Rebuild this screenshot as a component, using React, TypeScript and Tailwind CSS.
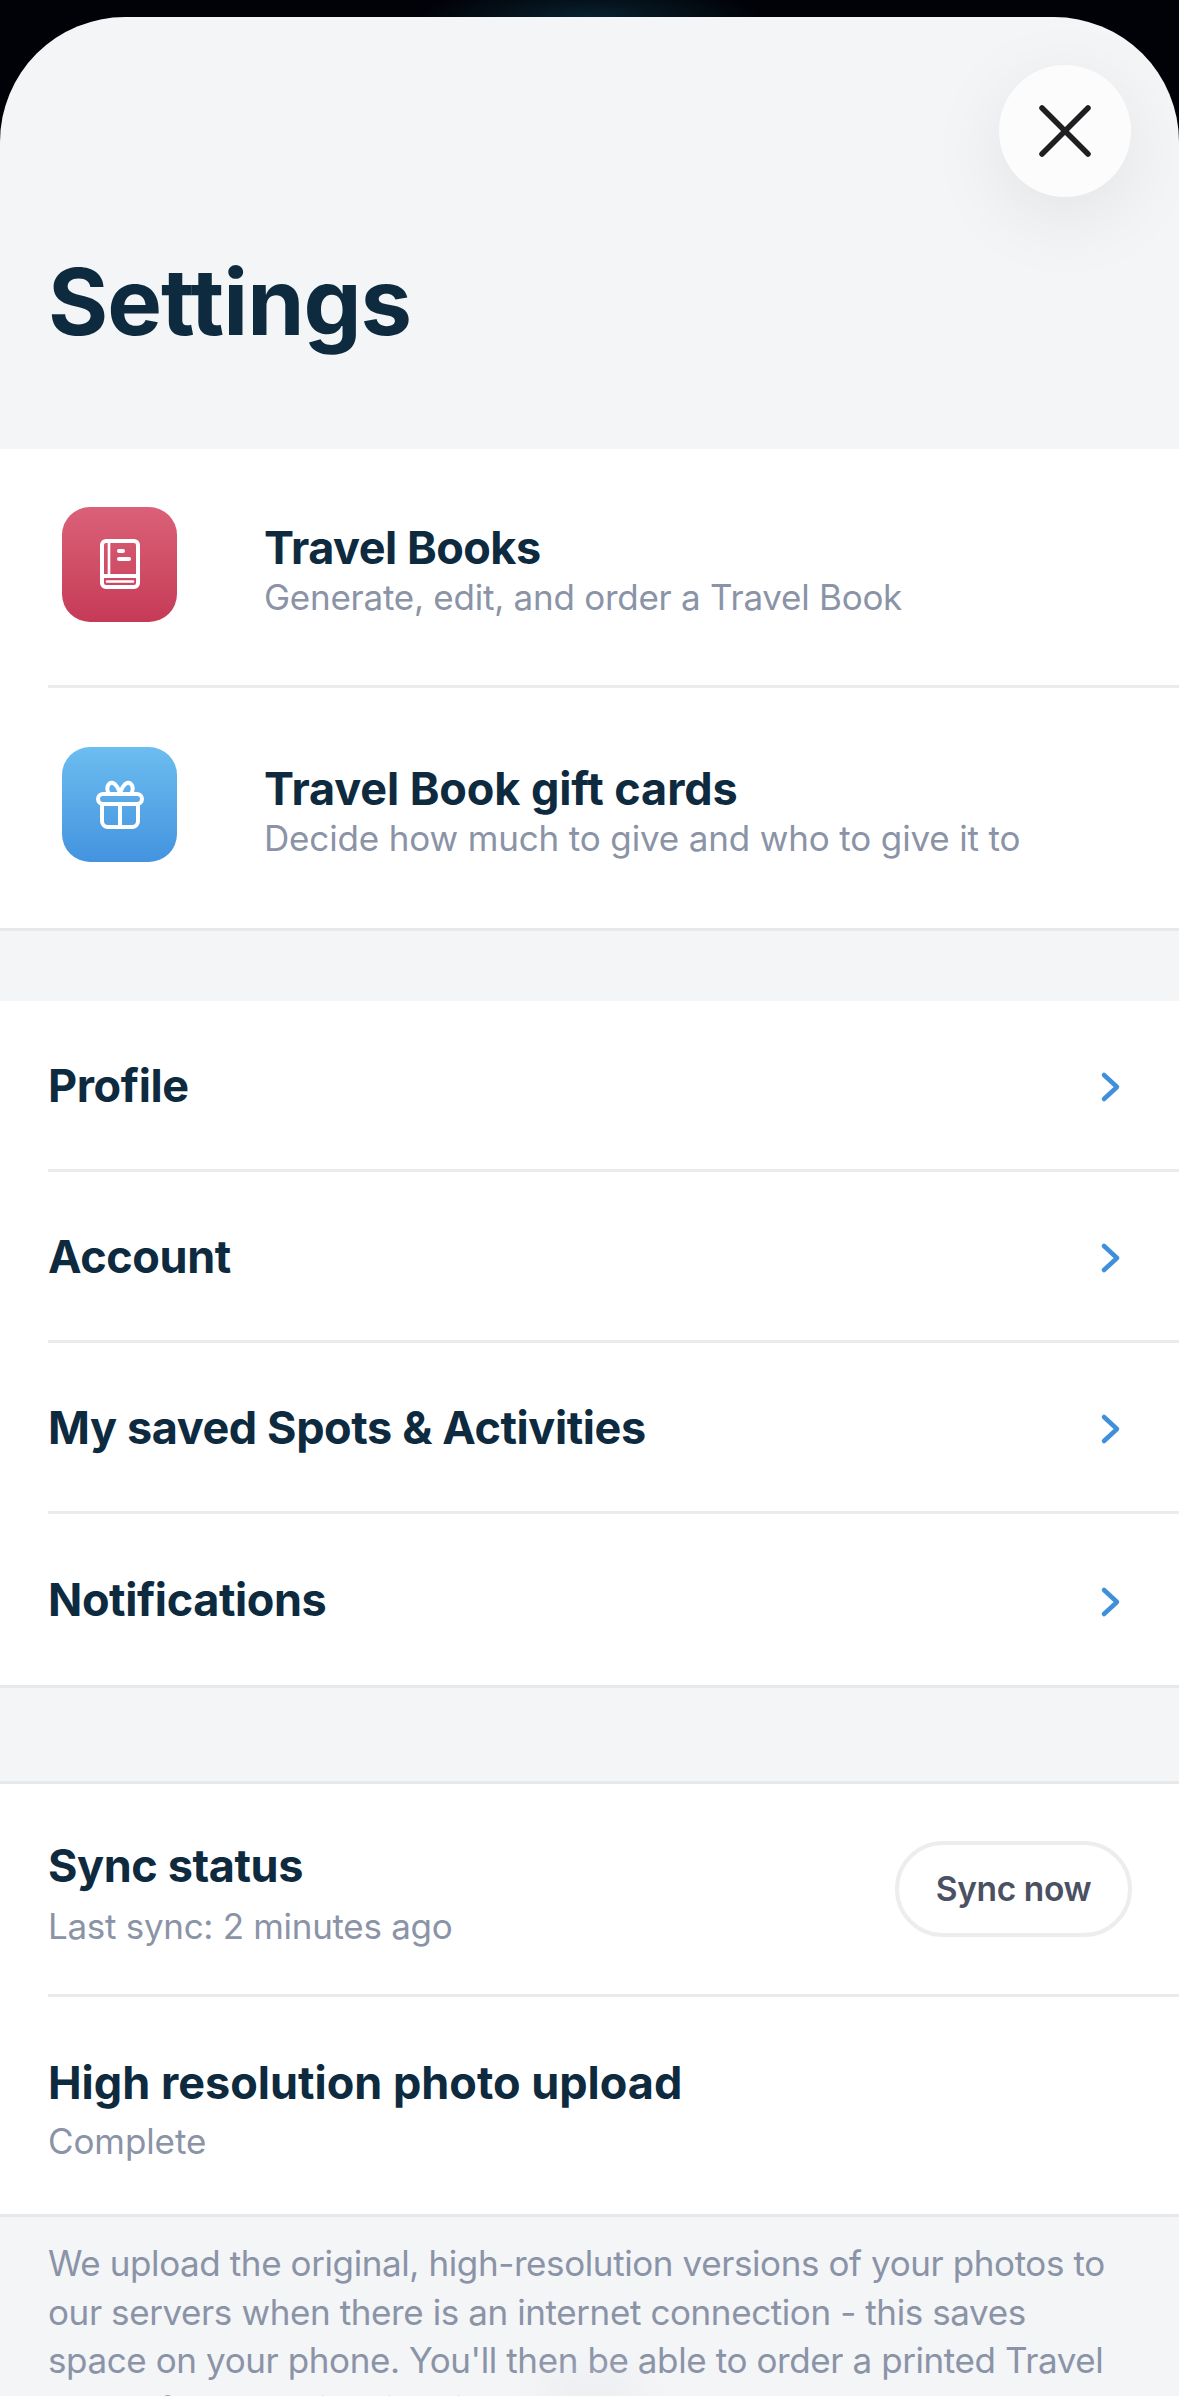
const font = "font-['Inter','Noto_Sans',sans-serif]";

function ChevronRight() {
  return (
    <svg width="28" height="36" viewBox="0 0 28 36" fill="none" className="mt-[4px] shrink-0">
      <path d="M7 6 L20 18 L7 30" stroke="#3f8fdb" strokeWidth="4.5" strokeLinecap="round" strokeLinejoin="round" />
    </svg>
  );
}

function BookIcon() {
  return (
    <svg width="40" height="50" viewBox="0 0 40 50" fill="none" stroke="#fff" strokeWidth="4" strokeLinecap="round" strokeLinejoin="round">
      <rect x="2" y="2" width="36" height="46" rx="4" />
      <path d="M9 3 V36" strokeWidth="2.6" />
      <path d="M3 37 H37" />
      <path d="M7 42.5 H33" strokeWidth="2.6" />
      <path d="M19 12 H23" />
      <path d="M19 20 H29" />
    </svg>
  );
}

function GiftIcon() {
  return (
    <svg width="48" height="49" viewBox="0 0 48 49" fill="none" stroke="#fff" strokeWidth="4" strokeLinecap="round" strokeLinejoin="round">
      <rect x="2" y="14" width="44" height="10" rx="5" />
      <path d="M6 24 V41 a6 6 0 0 0 6 6 H36 a6 6 0 0 0 6 -6 V24" />
      <path d="M24 24 V47" />
      <path d="M13 14 C9 7 13 2 17 3 C20 4 23 9 24 14 C25 9 28 4 31 3 C35 2 39 7 35 14" />
    </svg>
  );
}

function NavRow({ label, last }: { label: string; last?: boolean }) {
  return (
    <div className="pl-[48px]">
      <div className={`flex h-[171px] items-center justify-between pr-[54px] ${last ? '' : 'border-b-[3px] border-[#e9ebed]'}`}>
        <span className="mt-[1px] text-[45px] font-bold tracking-[-0.4px] text-[#0e2a3f]">{label}</span>
        <ChevronRight />
      </div>
    </div>
  );
}

export default function App() {
  return (
    <div className={`relative h-[2396px] w-[1179px] overflow-hidden bg-[radial-gradient(ellipse_170px_34px_at_590px_17px,#08212e,#010208)] pt-[17px] ${font}`}>
      <div className="h-[2379px] overflow-hidden rounded-t-[125px] bg-[#f3f5f7]">
        {/* Header */}
        <div className="relative h-[432px]">
          <div className="absolute left-[999px] top-[48px] flex h-[132px] w-[132px] items-center justify-center rounded-full bg-[#fcfcfd] shadow-[0_20px_80px_rgba(0,0,0,0.08)]">
            <svg width="54" height="54" viewBox="0 0 54 54" fill="none" stroke="#1f1f21" strokeWidth="5.5" strokeLinecap="round">
              <path d="M4 4 L50 50" />
              <path d="M50 4 L4 50" />
            </svg>
          </div>
          <h1 className="absolute left-[48px] top-[230px] text-[92px] font-bold leading-[110px] tracking-[-1px] text-[#0e2a3f]">Settings</h1>
        </div>

        {/* Travel Books */}
        <div className="border-b-[3px] border-[#e6e8ea] bg-white">
          <div className="pl-[48px]">
            <div className="flex h-[239px] items-center border-b-[3px] border-[#e9ebed]">
              <div className="mb-[6px] ml-[14px] flex h-[115px] w-[115px] shrink-0 items-center justify-center rounded-[28px] bg-gradient-to-b from-[#da6178] to-[#c63a57]">
                <BookIcon />
              </div>
              <div className="ml-[87px] mt-[4px]">
                <div className="text-[45px] font-bold leading-[52px] tracking-[-0.5px] text-[#0e2a3f]">Travel Books</div>
                <div className="mt-[3px] text-[35px] leading-[40px] tracking-[-0.25px] text-[#8b93a7]">Generate, edit, and order a Travel Book</div>
              </div>
            </div>
            <div className="flex h-[240px] items-center">
              <div className="mb-[7px] ml-[14px] flex h-[115px] w-[115px] shrink-0 items-center justify-center rounded-[28px] bg-gradient-to-b from-[#6cbdf0] to-[#4393df]">
                <GiftIcon />
              </div>
              <div className="ml-[87px] mt-[4px]">
                <div className="text-[45px] font-bold leading-[52px] tracking-[-0.1px] text-[#0e2a3f]">Travel Book gift cards</div>
                <div className="mt-[3px] text-[35px] leading-[40px] tracking-[-0.15px] text-[#8b93a7]">Decide how much to give and who to give it to</div>
              </div>
            </div>
          </div>
        </div>

        {/* Nav rows */}
        <div className="mt-[70px] border-b-[3px] border-[#e6e8ea] bg-white">
          <NavRow label="Profile" />
          <NavRow label="Account" />
          <NavRow label="My saved Spots & Activities" />
          <NavRow label="Notifications" last />
        </div>

        {/* Sync */}
        <div className="mt-[93px] border-y-[3px] border-[#e6e8ea] bg-white">
          <div className="pl-[48px]">
            <div className="flex h-[213px] items-center justify-between border-b-[3px] border-[#e9ebed] pr-[47px]">
              <div className="mt-[7px]">
                <div className="text-[45px] font-bold leading-[56px] tracking-[-0.4px] text-[#0e2a3f]">Sync status</div>
                <div className="mt-[10px] text-[35px] leading-[44px] tracking-[-0.3px] text-[#8b93a7]">Last sync: 2 minutes ago</div>
              </div>
              <div className="flex h-[96px] w-[237px] items-center justify-center rounded-full border-[4px] border-[#ebedef] text-[33.5px] font-semibold tracking-[-0.4px] text-[#4b5163]">Sync now</div>
            </div>
            <div className="flex h-[217px] flex-col justify-center">
              <div className="mt-[6px] text-[45px] font-bold leading-[56px] tracking-[0px] text-[#0e2a3f]">High resolution photo upload</div>
              <div className="mt-[8px] text-[35px] leading-[44px] tracking-[-0.1px] text-[#8b93a7]">Complete</div>
            </div>
          </div>
        </div>

        <p className="px-[48px] pt-[22px] text-[35px] leading-[48.5px] tracking-[-0.4px] text-[#8b93a7]">
          We upload the original, high-resolution versions of your photos to our servers when there is an internet connection - this saves space on your phone. You'll then be able to order a printed Travel Books for your trip with high-res photos
        </p>
      </div>

      {/* faint home indicator smudge */}
      <div className="absolute bottom-[-10px] left-[540px] h-[30px] w-[100px] rounded-full bg-[#dfe2e5] opacity-40 blur-lg" />
    </div>
  );
}
